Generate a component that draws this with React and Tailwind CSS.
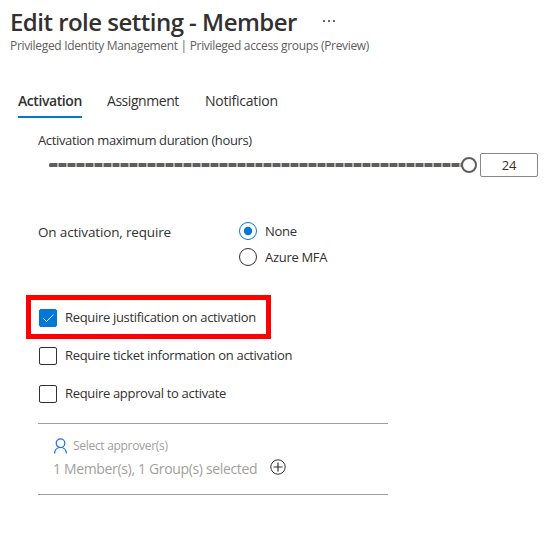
import React from "react";

const tickCount = 46;
const tickStep = 420 / 47;

function Radio({ label, checked }) {
  return (
    <label className="flex h-[26px] items-center gap-2">
      <svg width="18" height="18" viewBox="0 0 18 18" fill="none">
        <circle cx="9" cy="9" r="8.5" stroke={checked ? "#0078d4" : "#323130"} />
        {checked && <circle cx="9" cy="9" r="4.2" fill="#0078d4" />}
      </svg>
      <span className="whitespace-nowrap pt-[2px] tracking-[-0.3px]">{label}</span>
    </label>
  );
}

function Checkbox({ label, checked }) {
  return (
    <label className="flex h-[18px] items-center gap-2">
      <span
        className={
          "flex size-[18px] shrink-0 items-center justify-center rounded-[2px] border " +
          (checked ? "border-[#0078d4] bg-[#0078d4]" : "border-[#323130] bg-white")
        }
      >
        {checked && (
          <svg width="16" height="16" viewBox="0 0 16 16" fill="none">
            <path d="M3.3 8.3 L6.5 11.5 L13.5 4.5" stroke="#fff" strokeWidth="1" />
          </svg>
        )}
      </span>
      <span className="whitespace-nowrap pb-[2px] leading-[18px] tracking-[-0.32px]">{label}</span>
    </label>
  );
}

export default function App() {
  return (
    <div className="h-[555px] w-[548px] overflow-hidden bg-white font-['Open_Sans','Noto_Sans',sans-serif] text-[13px] text-[#323130]">
      <header className="pl-[10px] pt-[5px]">
        <div className="flex h-8 items-center">
          <h1 className="w-[313px] whitespace-nowrap pt-[2px] text-[24px] font-semibold leading-8 tracking-[-0.52px]">
            Edit role setting - Member
          </h1>
          <svg width="12" height="2" viewBox="0 0 12 2" fill="#605e5c">
            <rect x="0" width="2" height="2" rx="0.5" />
            <rect x="5" width="2" height="2" rx="0.5" />
            <rect x="10" width="2" height="2" rx="0.5" />
          </svg>
        </div>
        <p className="whitespace-nowrap pt-px text-[12px] leading-4 tracking-[-0.32px] text-[#605e5c]">
          Privileged Identity Management | Privileged access groups (Preview)
        </p>
      </header>

      <nav className="mt-[36px] flex h-7 pl-[18px] text-[14px] leading-[22px]">
        <span className="w-16 whitespace-nowrap border-b-2 border-[#0078d4] font-semibold tracking-[-0.42px]">
          Activation
        </span>
        <span className="ml-[25px] w-[73px] whitespace-nowrap tracking-[-0.45px]">Assignment</span>
        <span className="ml-[25px] whitespace-nowrap tracking-[-0.25px]">Notification</span>
      </nav>

      <main className="pl-[38px]">
        <div className="mt-3 h-[23px] whitespace-nowrap leading-5 tracking-[-0.36px]">
          Activation maximum duration (hours)
        </div>
        <div className="flex h-6 items-center pl-[11px]">
          <svg width="428" height="16" viewBox="0 0 428 16" fill="none">
            <rect x="0" y="6" width="416" height="4" rx="1.5" fill="#605e5c" />
            {Array.from({ length: tickCount }, (_, i) => (
              <rect
                key={i}
                x={Math.round((i + 1) * tickStep) - 1}
                y="6"
                width="2"
                height="4"
                fill="#b3b0ad"
              />
            ))}
            <circle cx="420" cy="8" r="7" fill="#fff" stroke="#605e5c" strokeWidth="2" />
          </svg>
          <div className="ml-[3px] flex h-6 w-[58px] items-center justify-center rounded-[2px] border border-[#8a8886] pt-[2px] tracking-[-0.3px]">
            24
          </div>
        </div>

        <div className="mt-[41px] flex h-[52px]">
          <span className="w-[201px] whitespace-nowrap text-[13.5px] leading-7 tracking-[-0.16px]">
            On activation, require
          </span>
          <div>
            <Radio label="None" checked />
            <Radio label="Azure MFA" />
          </div>
        </div>

        <div className="-ml-3 mt-[25px] h-11 w-[245px] border-[5px] border-[#ff0000] pl-2 pt-[9px]">
          <Checkbox label="Require justification on activation" checked />
        </div>
        <div className="mt-2 flex flex-col gap-5 pl-px">
          <Checkbox label="Require ticket information on activation" />
          <Checkbox label="Require approval to activate" />
        </div>

        <section className="mt-5 h-[72px] w-[350px] border-y border-[#a19f9d] pl-[15px] pt-3 text-[#a19f9d]">
          <div className="flex h-5 items-center gap-[6px] pl-px">
            <svg width="13" height="16" viewBox="0 0 13 16" fill="none" stroke="#1f6fe5" strokeWidth="1.2">
              <circle cx="6.5" cy="5.2" r="4.3" />
              <path d="M0.6 15.5 C0.8 11.5 3 9.5 6.5 9.5 S12.2 11.5 12.4 15.5" />
            </svg>
            <span className="whitespace-nowrap text-[12px] tracking-[-0.3px]">Select approver(s)</span>
          </div>
          <div className="flex h-6 items-center">
            <span className="w-[217px] whitespace-nowrap pt-[2px] text-[14px] leading-6 tracking-[-0.34px]">
              1 Member(s), 1 Group(s) selected
            </span>
            <svg className="-mt-[3px]" width="16" height="16" viewBox="0 0 16 16" fill="none" stroke="#323130">
              <circle cx="8" cy="8" r="7.2" />
              <path d="M8 3.5 V12.5 M3.5 8 H12.5" strokeWidth="1.2" />
            </svg>
          </div>
        </section>
      </main>
    </div>
  );
}
